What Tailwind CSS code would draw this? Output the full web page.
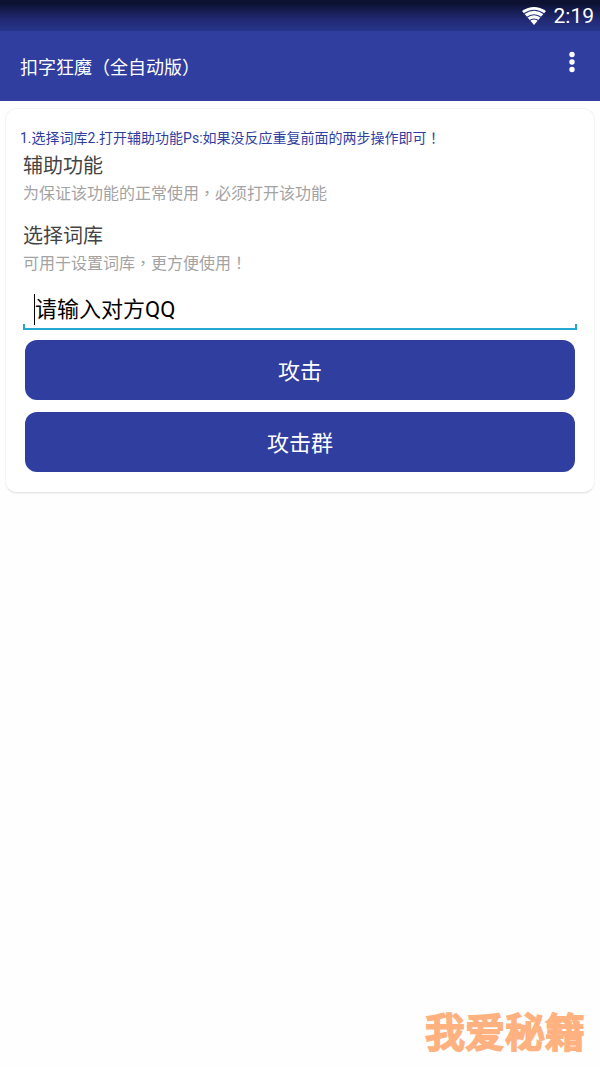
<!DOCTYPE html>
<html lang="zh-CN">
<head>
<meta charset="utf-8">
<meta name="viewport" content="width=device-width, initial-scale=1">
<title>扣字狂魔（全自动版）</title>
<script src="https://cdn.jsdelivr.net/npm/@tailwindcss/browser@4"></script>
</head>
<body class="flex min-h-screen flex-col bg-[#fefefe] font-[Roboto,'Noto_Sans_CJK_SC',sans-serif]">
<div class="flex h-[31px] items-center justify-end gap-2 bg-linear-to-b from-[#0c1132] from-10% via-[#222a75] via-65% to-[#26348b] pr-1.5 text-white">
  <svg class="h-5 w-6" viewBox="0 0 24 20" aria-label="Wi-Fi" role="img">
    <path d="M0 5Q12-3 24 5L12 19Z" fill="#fff"/>
    <path d="M1.500 8Q12 .5 22.500 8M4.500 11.500Q12 6 19.500 11.500M7 15Q12 11 17 15" fill="none" stroke="#27337f" stroke-width="1.200"/>
  </svg>
  <time class="text-[21px] leading-6">2:19</time>
</div>
<header class="flex h-[70px] items-center justify-between bg-[#303e9f] pl-5 pr-4 text-white">
  <h1 class="text-[18px] leading-6 pt-1">扣字狂魔（全自动版）</h1>
  <button type="button" aria-label="更多选项" class="mb-2 flex h-10 w-6 items-center justify-center">
    <svg class="h-6 w-2" viewBox="0 0 8 24" fill="#fff"><circle cx="4" cy="4.500" r="2.700"/><circle cx="4" cy="12" r="2.700"/><circle cx="4" cy="19.500" r="2.700"/></svg>
  </button>
</header>
<main class="mx-[5px] mt-[7px] rounded-xl border border-[#f3f3f3] border-b-[#e6e6e6] bg-white px-[14px] pt-[18px] pb-5 shadow-[0_1px_1px_#f2f2f2]">
  <p class="text-[14px] leading-5 text-[#303e9f]">1.选择词库2.打开辅助功能Ps:如果没反应重复前面的两步操作即可<span lang="zh-TW" class="font-['Noto_Sans_CJK_TC',sans-serif]">！</span></p>
  <button type="button" class="flex h-[70px] w-full flex-col px-[3px] pt-1 text-left">
    <span class="text-[20px] leading-7 text-[#444444]">辅助功能</span>
    <span class="text-[16px] leading-6 text-[#a3a3a3]">为保证该功能的正常使用<span lang="zh-TW" class="font-['Noto_Sans_CJK_TC',sans-serif]">，</span>必须打开该功能</span>
  </button>
  <button type="button" class="flex h-[70px] w-full flex-col px-[3px] pt-1 text-left">
    <span class="text-[20px] leading-7 text-[#444444]">选择词库</span>
    <span class="text-[16px] leading-6 text-[#a3a3a3]">可用于设置词库<span lang="zh-TW" class="font-['Noto_Sans_CJK_TC',sans-serif]">，</span>更方便使用<span lang="zh-TW" class="font-['Noto_Sans_CJK_TC',sans-serif]">！</span></span>
  </button>
  <div class="relative mx-[3px] mb-[10px]">
    <input type="text" aria-label="请输入对方QQ" placeholder="请输入对方QQ" class="block h-[42px] w-full bg-transparent px-3 pt-1 pb-1 text-[22px] leading-8 text-black outline-none placeholder:text-black">
    <span class="absolute top-[6px] left-[11px] h-[31px] w-px bg-black"></span>
    <span class="pointer-events-none absolute inset-x-0 bottom-0 h-[6px] border-x-2 border-b-2 border-[#25a7d1]"></span>
  </div>
  <div class="mx-[5px] flex flex-col gap-3">
    <button type="button" class="h-[60px] rounded-xl bg-[#303e9f] pt-1 text-[22px] leading-8 text-white">攻击</button>
    <button type="button" class="h-[60px] rounded-xl bg-[#303e9f] pt-1 text-[22px] leading-8 text-white">攻击群</button>
  </div>
</main>
<footer class="mt-auto flex justify-end pr-[15px] pb-3">
  <span class="font-['Noto_Sans_CJK_SC',sans-serif] text-[40px] leading-[50px] font-medium text-[#ffb27f] [-webkit-text-stroke:2px_#ffb27f] [stroke-linejoin:round]">我爱秘籍</span>
</footer>
</body>
</html>
